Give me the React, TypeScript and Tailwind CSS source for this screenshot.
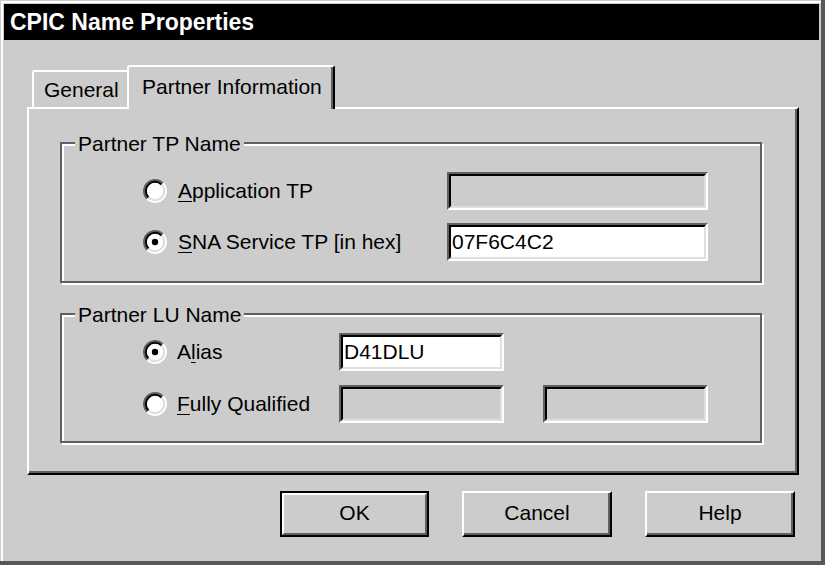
import React from "react";

const DK = "#606060";

function Radio({ checked }: { checked?: boolean }) {
  const p = (r: number) => {
    const d = r * 0.7071;
    return {
      a: `M ${12 - d} ${12 + d} A ${r} ${r} 0 0 1 ${12 + d} ${12 - d}`,
      b: `M ${12 + d} ${12 - d} A ${r} ${r} 0 0 1 ${12 - d} ${12 + d}`,
    };
  };
  const o = p(11);
  const i = p(9.2);
  return (
    <svg width="24" height="24" viewBox="0 0 24 24" className="shrink-0">
      <circle cx="12" cy="12" r="9" fill="#ffffff" />
      <path d={o.a} stroke={DK} strokeWidth="2" fill="none" />
      <path d={o.b} stroke="#ffffff" strokeWidth="2" fill="none" />
      <path d={i.a} stroke="#000000" strokeWidth="2" fill="none" />
      <path d={i.b} stroke="#dfdfdf" strokeWidth="2" fill="none" />
      {checked && <circle cx="12" cy="12" r="3.2" fill="#000000" />}
    </svg>
  );
}

function Field({ w, value, disabled }: { w: string; value?: string; disabled?: boolean }) {
  return (
    <div
      className={`${w} h-[38px] border-2 border-t-[#606060] border-l-[#606060] border-r-white border-b-white`}
    >
      <div
        className={`w-full h-full border-2 border-t-black border-l-black border-r-[#dfdfdf] border-b-[#dfdfdf] flex items-center pl-[1px] ${
          disabled ? "bg-[#cccccc]" : "bg-white"
        }`}
      >
        {value}
      </div>
    </div>
  );
}

function U({ children }: { children: React.ReactNode }) {
  return <span className="underline underline-offset-[3px] decoration-1">{children}</span>;
}

function Group({
  title,
  className,
  children,
}: {
  title: string;
  className: string;
  children: React.ReactNode;
}) {
  return (
    <div
      className={`relative w-[702px] border-2 border-[#606060] shadow-[inset_2px_2px_0_#ffffff,2px_2px_0_#ffffff] ${className}`}
    >
      <span className="absolute left-[13px] top-[-1px] -translate-y-1/2 bg-[#cccccc] px-[3px] leading-none">
        {title}
      </span>
      {children}
    </div>
  );
}

export default function App() {
  return (
    <div className="w-[825px] h-[565px] bg-[#cccccc] border-r-4 border-b-4 border-[#585858] pl-[1px] pt-[1px] font-['Liberation_Sans',Arial,sans-serif] text-[21px] text-black">
      <div className="w-full h-full border-l-2 border-t-2 border-white pl-[1px] pt-[1px] pr-[2px] flex flex-col">
        <div className="h-[36px] bg-black text-white font-bold text-[23px] pl-[6px] flex items-center">
          CPIC Name Properties
        </div>
        <div className="pl-[23px] pt-[25px] flex flex-col">
          <div className="h-[42px] flex items-end pl-[5px]">
            <div className="w-[95px] h-[37px] border-l-2 border-t-2 border-white rounded-tl-[3px] flex items-center pl-[10px] pt-[1px]">
              General
            </div>
            <div className="relative z-10 w-[208px] h-[44px] -mb-[2px] bg-[#cccccc] border-l-2 border-t-2 border-r-2 border-t-white border-l-white border-r-black rounded-t-[3px] shadow-[inset_-2px_0_0_#606060] flex items-center pl-[13px] pb-[3px]">
              Partner Information
            </div>
          </div>
          <div className="w-[772px] h-[368px] border-2 border-t-white border-l-white border-r-black border-b-black shadow-[inset_-2px_-2px_0_#606060] pl-[31px] pt-[33px]">
            <Group title="Partner TP Name" className="pl-[81px] pt-[28px] pb-[20px] flex flex-col gap-[13px]">
              <div className="flex items-center h-[38px]">
                <div className="w-[304px] flex items-center gap-[11px]">
                  <Radio />
                  <span>
                    <U>A</U>pplication TP
                  </span>
                </div>
                <Field w="w-[261px]" disabled />
              </div>
              <div className="flex items-center h-[38px]">
                <div className="w-[304px] flex items-center gap-[11px]">
                  <Radio checked />
                  <span>
                    <U>S</U>NA Service TP [in hex]
                  </span>
                </div>
                <Field w="w-[261px]" value="07F6C4C2" />
              </div>
            </Group>
            <Group title="Partner LU Name" className="mt-[30px] pl-[81px] pt-[18px] pb-[18px] flex flex-col gap-[14px]">
              <div className="flex items-center h-[38px]">
                <div className="w-[196px] flex items-center gap-[10px]">
                  <Radio checked />
                  <span>
                    A<U>l</U>ias
                  </span>
                </div>
                <Field w="w-[165px]" value="D41DLU" />
              </div>
              <div className="flex items-center h-[38px]">
                <div className="w-[196px] flex items-center gap-[10px]">
                  <Radio />
                  <span>
                    <U>F</U>ully Qualified
                  </span>
                </div>
                <Field w="w-[165px]" disabled />
                <div className="w-[39px]" />
                <Field w="w-[165px]" disabled />
              </div>
            </Group>
          </div>
          <div className="mt-[16px] flex justify-end pr-[24px] gap-[33px]">
            <div className="w-[149px] h-[46px] border-2 border-black">
              <div className="w-full h-full border-2 border-t-white border-l-white border-r-[#606060] border-b-[#606060] flex items-center justify-center pb-[2px]">
                OK
              </div>
            </div>
            <div className="w-[150px] h-[46px] border-2 border-t-white border-l-white border-r-black border-b-black shadow-[inset_-2px_-2px_0_#606060] flex items-center justify-center pb-[2px]">
              Cancel
            </div>
            <div className="w-[150px] h-[46px] border-2 border-t-white border-l-white border-r-black border-b-black shadow-[inset_-2px_-2px_0_#606060] flex items-center justify-center pb-[2px]">
              Help
            </div>
          </div>
        </div>
      </div>
    </div>
  );
}
